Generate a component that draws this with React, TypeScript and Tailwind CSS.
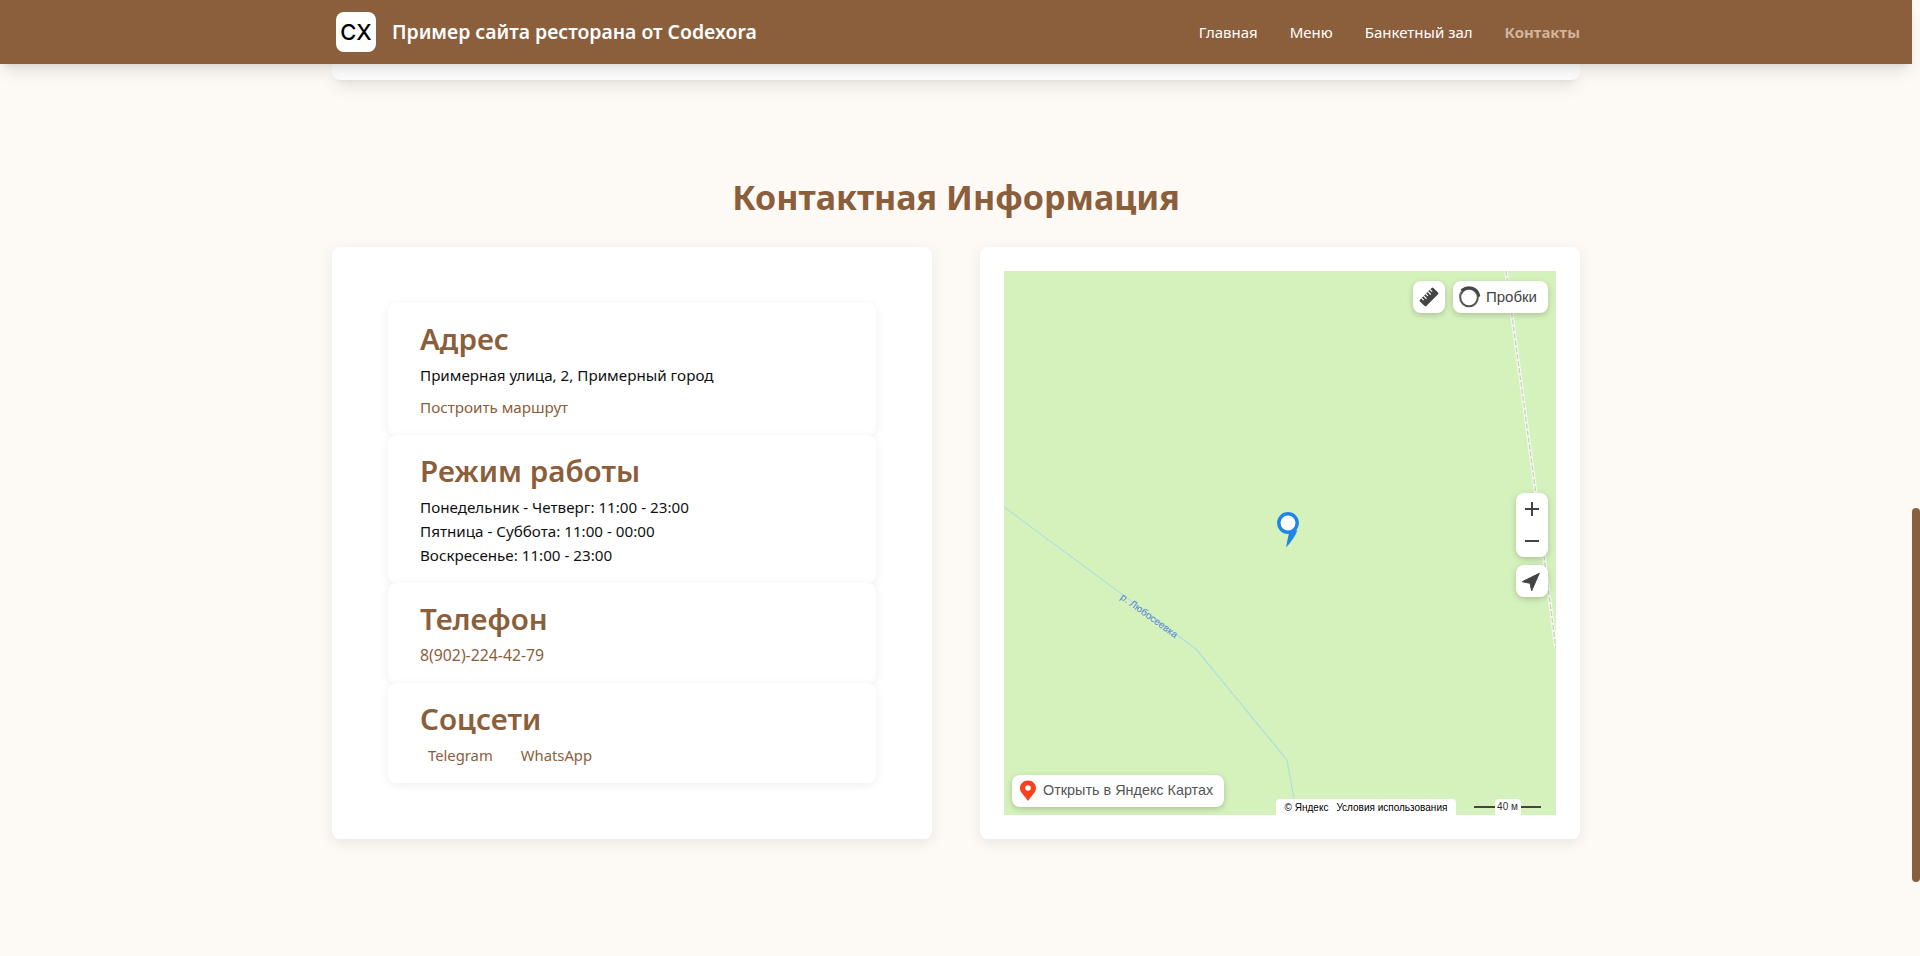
const font = "font-['Noto_Sans',sans-serif]"

function InfoCard({ title, children }: { title: string; children: React.ReactNode }) {
  return (
    <div className="bg-white rounded-lg shadow-[0_2px_10px_rgba(0,0,0,0.07)] px-8 py-4">
      <h3 className="text-[29.6px] leading-9 font-semibold text-[#8b5e3c] pt-[2px] mb-[6px]">{title}</h3>
      {children}
    </div>
  )
}

function MapControl({ className, children }: { className: string; children: React.ReactNode }) {
  return (
    <div className={`absolute bg-white rounded-lg shadow-[0_2px_6px_rgba(0,0,0,0.2)] flex items-center justify-center ${className}`}>
      {children}
    </div>
  )
}

function YandexMap() {
  return (
    <div className="relative h-[544px] bg-[#d5f2bc] overflow-hidden font-['Liberation_Sans',sans-serif]">
      <svg className="absolute inset-0" width="552" height="544" viewBox="0 0 552 544" fill="none">
        <path d="M0 236 L192 378 L283 489 L293 544" stroke="#b5dcdc" strokeWidth="1.2" />
        <path d="M502 0 L531 216 L552 378" stroke="#ffffff" strokeOpacity="0.7" strokeWidth="3.5" />
        <path d="M502 0 L531 216 L552 378" stroke="#c6d0c2" strokeWidth="1.3" strokeDasharray="5 2" />
        <text
          x="145"
          y="348"
          textAnchor="middle"
          fontSize="10"
          fill="#5688d8"
          transform="rotate(36 145 345)"
          fontFamily="Liberation Sans, sans-serif"
        >
          р. Любосеевка
        </text>
        {/* placemark */}
        <circle cx="284" cy="252" r="9.2" fill="#fff" stroke="#1e86e8" strokeWidth="3.4" />
        <path d="M285 262 L293.5 259 C291 266 287 271 282 276.5 C283 271 284 266 285 262 Z" fill="#1e86e8" />
      </svg>

      <MapControl className="top-[10px] left-[409px] w-8 h-8">
        <svg width="20" height="20" viewBox="0 0 20 20">
          <g transform="rotate(-45 10 10)">
            <rect x="0.5" y="5.5" width="19" height="9" rx="1.2" fill="#444" />
            <path d="M4 5.5v3M7 5.5v4M10 5.5v3M13 5.5v4M16 5.5v3" stroke="#fff" strokeWidth="1.2" />
          </g>
        </svg>
      </MapControl>
      <MapControl className="top-[10px] left-[449px] w-[95px] h-8 justify-start pl-[4px] gap-[5px] text-[15px] text-[#444]">
        <svg width="24" height="24" viewBox="0 0 24 24" fill="none" className="shrink-0">
          <circle cx="12" cy="12.5" r="8.8" stroke="#555" strokeWidth="2" />
          <path d="M5 5 A10.5 10.5 0 0 1 22 10.5" stroke="#444" strokeWidth="2.4" strokeLinecap="round" />
          <path d="M2.6 11 A10 10 0 0 1 5 5" stroke="#777" strokeWidth="1" />
        </svg>
        <span>Пробки</span>
      </MapControl>

      <MapControl className="top-[222px] left-[512px] w-8 h-16 flex-col">
        <svg width="32" height="32" viewBox="0 0 32 32"><path d="M16 9v14M9 16h14" stroke="#444" strokeWidth="2" /></svg>
        <svg width="32" height="32" viewBox="0 0 32 32"><path d="M9 16h14" stroke="#444" strokeWidth="2" /></svg>
      </MapControl>
      <MapControl className="top-[294px] left-[512px] w-8 h-8">
        <svg width="32" height="32" viewBox="0 0 32 32">
          <path d="M23.3 8.3 L15.7 25.7 L14 18.3 L6.3 16.7 Z" fill="#444" stroke="#444" strokeWidth="1" strokeLinejoin="round" />
        </svg>
      </MapControl>

      <MapControl className="bottom-2 left-2 w-[212px] h-8 justify-start pl-[7px] gap-[6px] text-[14.4px] text-[#555] whitespace-nowrap">
        <svg width="18" height="22" viewBox="0 0 18 22" className="shrink-0">
          <path d="M9 0.5 C4.3 0.5 1 4 1 8.3 C1 12.5 5.5 15.5 9 21 C12.5 15.5 17 12.5 17 8.3 C17 4 13.7 0.5 9 0.5 Z" fill="#fc3f1d" />
          <circle cx="9" cy="8" r="2.8" fill="#fff" />
        </svg>
        <span>Открыть в Яндекс Картах</span>
      </MapControl>

      <div className="absolute bottom-0 left-[272px] w-[180px] h-4 bg-white rounded-t flex items-center justify-center gap-2 text-[10px] text-black whitespace-nowrap">
        <span>© Яндекс</span>
        <span>Условия использования</span>
      </div>
      <div className="absolute bottom-0 left-[470px] w-[67px] h-4 flex items-center">
        <div className="flex-1 h-[2px] bg-[#444]" />
        <div className="w-[26px] h-4 bg-white rounded-t text-[10px] text-[#333] text-center leading-4">40 м</div>
        <div className="flex-1 h-[2px] bg-[#444]" />
      </div>
    </div>
  )
}

export default function App() {
  return (
    <div className={`flex h-screen overflow-hidden bg-[#fdf9f4] text-[15.2px] ${font}`}>
      <div className="flex-1 min-w-0">
        <header className="relative z-10 h-16 bg-[#8b5e3c] shadow-lg">
          <div className="h-full w-[1248px] mx-auto flex items-center justify-between">
            <div className="flex items-center gap-4 pl-1">
              <div className="w-10 h-10 bg-white rounded-lg flex items-center justify-center text-black text-[22px] font-medium font-['Inter',sans-serif]">
                CX
              </div>
              <span className="text-white text-[19.4px] font-semibold">Пример сайта ресторана от Codexora</span>
            </div>
            <nav className="flex items-center gap-8 text-white text-[15px]">
              <a>Главная</a>
              <a>Меню</a>
              <a>Банкетный зал</a>
              <a className="font-bold text-[#d2b49c]">Контакты</a>
            </nav>
          </div>
        </header>

        <div className="w-[1248px] mx-auto">
          <div className="h-4 bg-white rounded-b-lg shadow-lg" />

          <h2 className="mt-[97px] mb-[30px] text-[34px] leading-10 font-bold text-center text-[#8b5e3c]">Контактная Информация</h2>

          <div className="grid grid-cols-2 gap-12">
            <div className="bg-white rounded-lg shadow-[0_4px_14px_rgba(0,0,0,0.08)] p-14">
              <InfoCard title="Адрес">
                <p className="text-[#111] leading-6">Примерная улица, 2, Примерный город</p>
                <a className="block mt-2 leading-6 text-[#8b5e3c]">Построить маршрут</a>
              </InfoCard>
              <InfoCard title="Режим работы">
                <p className="text-[#111] leading-6">Понедельник - Четверг: 11:00 - 23:00</p>
                <p className="text-[#111] leading-6">Пятница - Суббота: 11:00 - 00:00</p>
                <p className="text-[#111] leading-6">Воскресенье: 11:00 - 23:00</p>
              </InfoCard>
              <InfoCard title="Телефон">
                <a className="block leading-6 text-[15.8px] text-[#8b5e3c]">8(902)-224-42-79</a>
              </InfoCard>
              <InfoCard title="Соцсети">
                <div className="flex gap-7 pl-2 leading-6 text-[14.8px] text-[#8b5e3c]">
                  <a>Telegram</a>
                  <a>WhatsApp</a>
                </div>
              </InfoCard>
            </div>

            <div className="bg-white rounded-lg shadow-[0_4px_14px_rgba(0,0,0,0.08)] p-6">
              <YandexMap />
            </div>
          </div>
        </div>
      </div>

      {/* scrollbar */}
      <div className="w-2 shrink-0">
        <div className="mt-[508px] h-[374px] bg-[#8b5e3c] rounded-full" />
      </div>
    </div>
  )
}
